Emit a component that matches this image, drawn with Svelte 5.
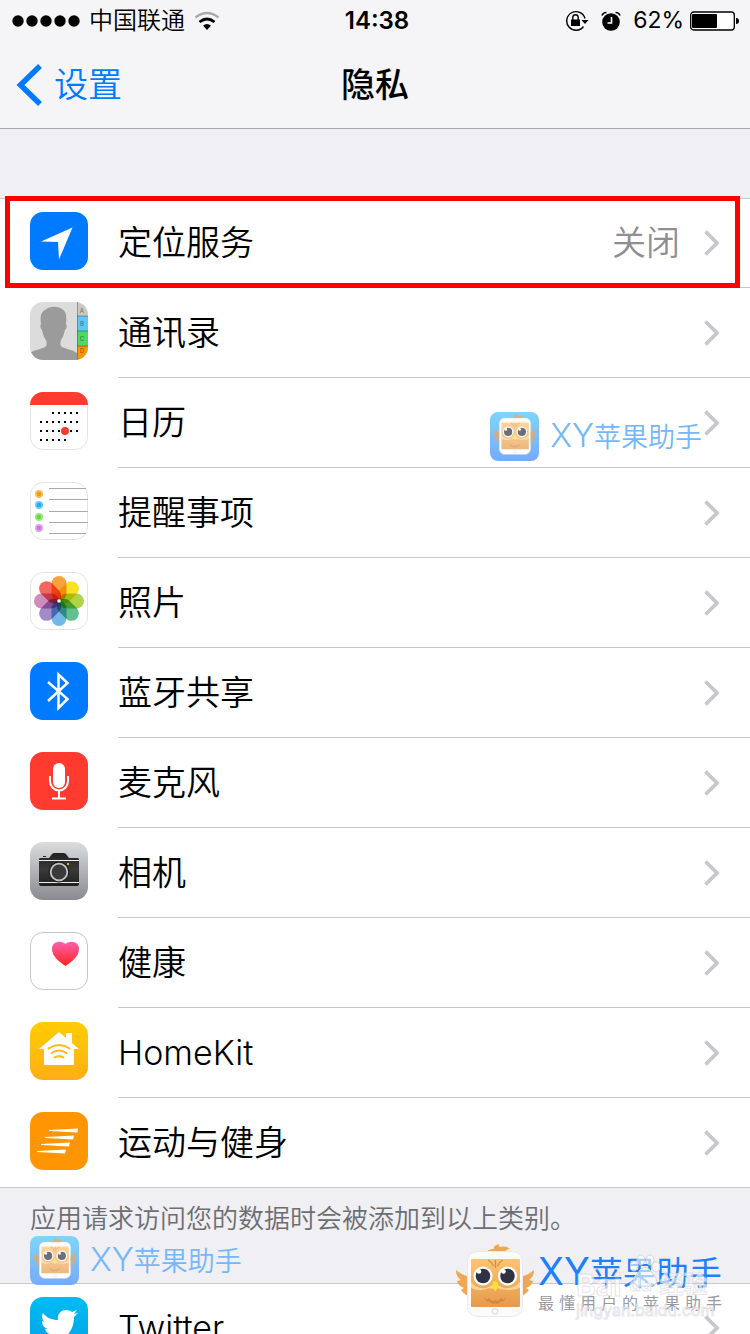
<script>
  const rows = [
    { id: 'location', label: '定位服务', value: '关闭' },
    { id: 'contacts', label: '通讯录' },
    { id: 'calendar', label: '日历' },
    { id: 'reminders', label: '提醒事项' },
    { id: 'photos', label: '照片' },
    { id: 'bluetooth', label: '蓝牙共享' },
    { id: 'microphone', label: '麦克风' },
    { id: 'camera', label: '相机' },
    { id: 'health', label: '健康' },
    { id: 'homekit', label: 'HomeKit' },
    { id: 'motion', label: '运动与健身' }
  ];
  const social = [{ id: 'twitter', label: 'Twitter' }];

  const petals = ['#f9a13a', '#f7e326', '#b0d348', '#62c08f', '#74b9e6', '#a18bc8', '#d08bbf', '#f4655c'];
  const dots = [
    { y: 20, from: 2, to: 6 },
    { y: 29, from: 0, to: 6 },
    { y: 38, from: 0, to: 6 },
    { y: 47, from: 0, to: 4 }
  ];
  const bullets = [
    { y: 12, c: '#ff9500' },
    { y: 23, c: '#1badf8' },
    { y: 35, c: '#63da38' },
    { y: 46, c: '#cc73e1' }
  ];
  const tabs = [
    { y: 0, c: '#c9c8c1', t: 'A', ty: 11 },
    { y: 14, c: '#5ac8fa', t: 'B', ty: 24 },
    { y: 29, c: '#4cd964', t: 'C', ty: 39 },
    { y: 44, c: '#ff9500', t: 'D', ty: 51 }
  ];
</script>

{#snippet owl()}
  <path d="M29 12c1-6 5-7 9-7-1-2 1-4 5-5-1 2 0 3 2 3 4-1 7 0 9 2-3 0-4 1-4 2 2 0 3 2 3 5z" fill="#f0a655" />
  <path d="M13 33C8 31 3 29 0 26c0 5 2 8 5 10l-4 1c1 4 4 6 7 7l-3 2c3 4 6 6 9 6zM65 33c5-2 10-4 13-7 0 5-2 8-5 10l4 1c-1 4-4 6-7 7l3 2c-3 4-6 6-9 6z" fill="#f0a655" />
  <rect x="11.500" y="7.500" width="55" height="65" rx="10" fill="#fbfbfe" stroke="#e8e8ee" />
  <rect x="15" y="15" width="49" height="48" rx="1" fill="url(#owl-face)" />
  <path d="M32 16q4 2 5.500 6M39.500 16v8M47 16q-4 2-5.500 6" fill="none" stroke="#d08b48" stroke-width="1.300" />
  <path d="M28 52q2 6 5 2 3 5 6 2 3 3 6-2 3 4 5-2-1 7-5 5-3 4-6 2-3 2-6-2-4 2-5-5z" fill="#cf8841" />
  <path d="M15 38q5 7 15 6l9-4 9 4q10 1 16-6v6q-12 4-23 0-4 1-8 0-9 4-18 0z" fill="#f9d49b" />
  <circle cx="27" cy="32" r="9.500" fill="#fff" />
  <circle cx="51.500" cy="32" r="9.500" fill="#fff" />
  <circle cx="27" cy="32" r="7.300" fill="#303143" />
  <circle cx="51.500" cy="32" r="7.300" fill="#303143" />
  <circle cx="23" cy="27.500" r="2.300" fill="#fff" />
  <circle cx="47.500" cy="27.500" r="2.300" fill="#fff" />
  <path d="M39.300 36.500q4 3 3 6l-3 5-3-5q-1-3 3-6z" fill="#ffe02e" />
  <circle cx="39" cy="67.500" r="2.800" fill="none" stroke="#d4d5dd" />
{/snippet}

{#snippet mark()}
  <span class="mark">
    <svg width="49" height="49" viewBox="0 0 49 49" aria-hidden="true">
      <rect width="49" height="49" rx="8" fill="url(#mark-bg)" />
      <rect x="9.500" y="6" width="31" height="36" rx="5" fill="#fff" />
      <g transform="translate(3 2) scale(.56)" opacity=".7">{@render owl()}</g>
    </svg>
    <span><b>XY</b>苹果助手</span>
  </span>
{/snippet}

{#snippet icon(id)}
  <svg class="icon" width="58" height="58" viewBox="0 0 58 58" aria-hidden="true">
    {#if id === 'location'}
      <rect width="58" height="58" rx="13" fill="#007aff" />
      <path d="M42.500 15.500L29 47.500 28 30 11 29.500z" fill="#fff" />
    {:else if id === 'contacts'}
      <g clip-path="url(#tile)">
        <rect width="58" height="58" fill="#dcdcdc" />
        <path d="M0 58v-7c4-3 12-4 15-6 2-1 2-4 1-7-3-4-3-7-4-10-2-2-2-4-1-6-1-8 0-12 4-14 5-4 12-4 17-1 4 2 5 7 4 15 1 2 1 4-1 6-1 4-2 7-4 10-1 3-1 6 1 7 4 2 11 3 15 6v7z" fill="#9b9b9b" />
        {#each tabs as t}
          <rect x="47" y={t.y} width="11" height="16" fill={t.c} />
          <path d={`M47 ${t.y}h11`} stroke="#000" stroke-opacity=".3" />
          <text x="52" y={t.ty} class="tab">{t.t}</text>
        {/each}
        <path d="M47.500 0v58" stroke="#000" stroke-opacity=".25" />
      </g>
    {:else if id === 'calendar'}
      <rect x=".5" y=".5" width="57" height="57" rx="12.500" fill="#fff" stroke="#e3e3e3" />
      <g clip-path="url(#tile)"><rect width="58" height="13" fill="#ff3b30" /></g>
      {#each dots as d}
        {#each Array(d.to - d.from + 1) as _, i}
          <rect x={10 + (d.from + i) * 6} y={d.y} width="2" height="2" />
        {/each}
      {/each}
      <circle cx="35" cy="39" r="4" fill="#ff3b30" />
    {:else if id === 'reminders'}
      <rect x=".5" y=".5" width="57" height="57" rx="12.500" fill="#fff" stroke="#e3e3e3" />
      {#each bullets as b}
        <circle cx="9" cy={b.y} r="4" fill={b.c} fill-opacity=".65" />
        <circle cx="9" cy={b.y} r="2.300" fill={b.c} />
      {/each}
      <path d="M19 6.500h37M19 17.500h39M19 29.500h39M19 40.500h39M19 51.500h37" stroke="#a8a8a8" />
    {:else if id === 'photos'}
      <rect x=".5" y=".5" width="57" height="57" rx="12.500" fill="#fff" stroke="#e3e3e3" />
      {#each petals as c, i}
        <rect class="petal" x="21.500" y="4" width="15" height="25" rx="7.500" fill={c} transform={`rotate(${i * 45} 29 29)`} />
      {/each}
      <circle cx="29" cy="29" r="1.800" fill="#fff" />
    {:else if id === 'bluetooth'}
      <rect width="58" height="58" rx="13" fill="#007aff" />
      <path d="M18 20l19.500 17L28.500 46V12.500L37.500 21 18 39" fill="none" stroke="#fff" stroke-width="2.500" />
    {:else if id === 'microphone'}
      <rect width="58" height="58" rx="13" fill="#ff3b30" />
      <rect x="23" y="11" width="12" height="25" rx="6" fill="#fff" />
      <path d="M20 24v5a9 9.500 0 0 0 18 0v-5M29 38.500v8M22 46.500h14" fill="none" stroke="#fff" stroke-width="2" />
    {:else if id === 'camera'}
      <rect width="58" height="58" rx="13" fill="url(#camera-bg)" />
      <path d="M9 17q0-1 2-1h8l3-4q1-1 3-1h8q2 0 3 1l3 4h8q2 0 2 1v25q0 2-2 2H11q-2 0-2-2z" fill="url(#camera-body)" />
      <path d="M9 18.500h40M9 40.500h40" stroke="#eee" />
      <path d="M13 14.500h3" stroke="#222" />
      <circle cx="29" cy="30" r="10.500" fill="#222" />
      <circle cx="29" cy="30" r="8.300" fill="#3a3a3a" stroke="#c5c5c8" stroke-width="1.800" />
      <rect x="37" y="21" width="2" height="2" fill="#f7b500" />
    {:else if id === 'health'}
      <rect x=".5" y=".5" width="57" height="57" rx="12.500" fill="#fff" stroke="#c6c6c6" />
      <path d="M35.500 34C30 30 22 25 22 17c0-8 9-9 13.500-5C40 8 49 9 49 17c0 8-8 13-13.500 17z" fill="url(#heart)" />
    {:else if id === 'homekit'}
      <rect width="58" height="58" rx="13" fill="url(#home-bg)" />
      <path d="M9 27L29 10l7 6v-5h6v10l7 6h-5v16H14V27z" fill="#fff" />
      <path d="M18.500 26.500q10.500-7 21 0M21.500 31q7.500-5 15 0M24.500 35.500q4.500-2.500 9 0" fill="none" stroke="#ffb914" stroke-width="2" stroke-linecap="round" />
    {:else if id === 'motion'}
      <rect width="58" height="58" rx="13" fill="#ff9500" />
      <path d="M19 18l29-1.500-.5 4L19 19zM15 25l29-1.500-1 4L15 26zM11 32l29-1.500-1 4L11 33zM7 39l29-1.500-1 4L7 40z" fill="#fff" />
    {:else if id === 'twitter'}
      <rect width="58" height="58" rx="13" fill="url(#twitter-bg)" />
      <path d="M13 16c4 5 9 7 15 7-1-6 3-10 8-10 3 0 5 1 6 2l5-2-3 4 4-1-4 4c0 15-10 24-21 24-5 0-9-1-12-3 4 0 8-1 11-3-4-1-6-3-7-6h3c-4-1-6-4-6-8l3 1c-3-2-4-6-2-9z" fill="#fff" />
    {/if}
  </svg>
{/snippet}

{#snippet row(r)}
  <li class="row">
    {@render icon(r.id)}
    <a class="link" href={`#${r.id}`}>
      <span class="label">{r.label}</span>
      {#if r.value}<span class="value">{r.value}</span>{/if}
      <svg width="18" height="28" viewBox="0 0 18 28" aria-hidden="true">
        <path d="M2.500 2.500L14 14 2.500 25.500" fill="none" stroke="#c7c7cc" stroke-width="3.800" />
      </svg>
    </a>
    {#if r.id === 'location'}<span class="frame"></span>{/if}
    {#if r.id === 'calendar'}<div class="over">{@render mark()}</div>{/if}
  </li>
{/snippet}

<svg class="defs" width="0" height="0" aria-hidden="true">
  <defs>
    <clipPath id="tile"><rect width="58" height="58" rx="13" /></clipPath>
    <linearGradient id="owl-face" x2="0" y2="1"><stop stop-color="#ffc470" /><stop offset="1" stop-color="#e69a4b" /></linearGradient>
    <linearGradient id="mark-bg" x2="0" y2="1"><stop stop-color="#7fd5f8" /><stop offset="1" stop-color="#76aaff" /></linearGradient>
    <linearGradient id="camera-bg" x2="0" y2="1"><stop stop-color="#dbdcde" /><stop offset="1" stop-color="#898b91" /></linearGradient>
    <linearGradient id="camera-body" x2="0" y2="1"><stop stop-color="#222" /><stop offset=".5" stop-color="#3a3a3a" /><stop offset="1" stop-color="#1e1e1e" /></linearGradient>
    <linearGradient id="heart" x2="0" y2="1"><stop stop-color="#ff5fb4" /><stop offset="1" stop-color="#ff2419" /></linearGradient>
    <linearGradient id="home-bg" x2="0" y2="1"><stop stop-color="#ffcc02" /><stop offset="1" stop-color="#ffae16" /></linearGradient>
    <linearGradient id="twitter-bg" x2="0" y2="1"><stop stop-color="#00bdf2" /><stop offset="1" stop-color="#009ee8" /></linearGradient>
  </defs>
</svg>

<div class="screen">
  <header>
    <div class="status">
      <div class="side">
        <svg width="68" height="12" viewBox="0 0 68 12" aria-hidden="true">
          {#each Array(5) as _, i}<circle cx={6 + i * 14} cy="6" r="5.700" />{/each}
        </svg>
        <span class="carrier">中国联通</span>
        <svg width="26" height="20" viewBox="0 0 26 20" aria-hidden="true">
          <path d="M1.500 6.500q11.500-9 23 0" fill="none" stroke="#aaa" stroke-width="2.600" />
          <path d="M5.500 11q7.500-6 15 0" fill="none" stroke="#000" stroke-width="2.800" />
          <path d="M9 14.500q4-3 8 0L13 19z" />
        </svg>
      </div>
      <time>14:38</time>
      <div class="side end">
        <svg width="24" height="22" viewBox="0 0 24 22" aria-hidden="true">
          <path d="M18.500 16.500A9.300 9.300 0 1 1 20 8.500" fill="none" stroke="#000" stroke-width="1.400" />
          <path d="M16.500 10h7L20 14zM6 9.500h9V16H6z" />
          <path d="M7.800 10V7.500a2.700 2.700 0 0 1 5.400 0V10" fill="none" stroke="#000" stroke-width="1.400" />
        </svg>
        <svg class="alarm" width="20" height="20" viewBox="0 0 20 20" aria-hidden="true">
          <circle cx="10" cy="11" r="8.800" />
          <path d="M1 4.500Q2 1.500 5.500 1.500M19 4.500Q18 1.500 14.500 1.500" fill="none" stroke="#000" stroke-width="1.600" />
          <path d="M10.500 6v6H6.500" fill="none" stroke="#fff" stroke-width="1.600" />
        </svg>
        <span class="percent">62%</span>
        <svg width="49" height="20" viewBox="0 0 49 20" aria-hidden="true">
          <rect x=".7" y="1" width="43.600" height="18" rx="3" fill="#fff" stroke="#000" stroke-width="1.300" />
          <rect x="2" y="3" width="25" height="14" rx="1" />
          <path d="M46 7q3 0 3 3t-3 3z" />
        </svg>
      </div>
    </div>
    <nav>
      <a class="back" href="#settings">
        <svg width="26" height="42" viewBox="0 0 26 42" aria-hidden="true">
          <path d="M24 2L4.500 21 24 40" fill="none" stroke="#007aff" stroke-width="5.500" />
        </svg>
        设置
      </a>
      <h1>隐私</h1>
    </nav>
  </header>

  <main>
    <ul>{#each rows as r}{@render row(r)}{/each}</ul>
    <section class="note">
      <p>应用请求访问您的数据时会被添加到以上类别。</p>
      {@render mark()}
    </section>
    <ul>{#each social as r}{@render row(r)}{/each}</ul>
  </main>

  <div class="brand">
    <svg width="80" height="74" viewBox="0 0 80 74" aria-hidden="true">{@render owl()}</svg>
    <div class="words">
      <div class="name"><b>XY</b>苹果助手</div>
      <div class="motto">{#each '最懂用户的苹果助手' as ch}<span>{ch}</span>{/each}</div>
    </div>
    <div class="stamp">
      <svg class="paw" width="30" height="34" viewBox="0 0 30 34" aria-hidden="true">
        <ellipse cx="4" cy="12" rx="4" ry="5" /><ellipse cx="11" cy="6" rx="4" ry="5" /><ellipse cx="20" cy="6" rx="4" ry="5" /><ellipse cx="26" cy="13" rx="4" ry="5" />
        <path d="M15 13q4 0 7 6 6 5 4 10-3 4-11 3-8 1-11-3-2-5 4-10 3-6 7-6z" />
      </svg>
      <div class="big"><span>Bai</span><span class="du">du</span><span class="zh">经验</span></div>
      <div class="url">jingyan.baidu.com</div>
    </div>
  </div>
</div>

<style>
  :global(body) { margin: 0; background: #efeff4; }
  .defs { position: absolute; }
  .screen {
    position: relative;
    height: 100vh;
    overflow: hidden;
    background: #efeff4;
    color: #000;
    font-family: Inter, "Noto Sans CJK SC", sans-serif;
    font-weight: 400;
  }
  a { color: inherit; text-decoration: none; }
  svg { display: block; flex: none; }
  .tab { font-size: 6px; font-weight: 500; text-anchor: middle; fill: rgb(0 0 0 / .45); }
  .petal { mix-blend-mode: multiply; }
  header { background: #f5f5f7; border-bottom: 1px solid #a7a7aa; }
  .status {
    display: grid;
    grid-template-columns: 1fr auto 1fr;
    align-items: center;
    height: 41px;
    padding: 0 11px 0 12px;
    font-size: 24px;
    line-height: 41px;
  }
  .side { display: flex; align-items: center; gap: 9px; }
  .carrier { font-weight: 350; }
  .end { justify-content: flex-end; gap: 6px; }
  .alarm { margin: 0 6px; }
  .percent { font-size: 23px; }
  time { font-weight: 600; padding-left: 3px; }
  nav {
    display: grid;
    grid-template-columns: 1fr auto 1fr;
    align-items: center;
    height: 87px;
    padding: 0 16px;
    font-size: 34px;
    line-height: 48px;
  }
  .back { display: flex; align-items: center; gap: 12px; color: #007aff; font-size: 34px; font-weight: 350; }
  h1 { margin: 0; font-size: 34px; font-weight: 500; }
  main { padding-top: 69px; }
  ul {
    margin: 0;
    padding: 0;
    list-style: none;
    background: #fff;
    box-shadow: inset 0 1px #c8c7cc, inset 0 -1px #c8c7cc;
  }
  .row { position: relative; display: flex; align-items: flex-start; gap: 30px; padding-left: 30px; }
  .icon { margin-top: 14px; isolation: isolate; }
  .link {
    flex: 1;
    box-sizing: border-box;
    display: flex;
    align-items: center;
    height: 90px;
    padding-right: 29px;
    border-bottom: 1px solid #c8c7cc;
    font-size: 34px;
    line-height: 50px;
    font-weight: 350;
  }
  .label { flex: 1; }
  .value { margin-right: 23px; color: #8e8e93; }
  .frame { position: absolute; inset: -2px 10px 0 5px; border: 5px solid #f00; }
  .over { position: absolute; right: 48px; top: 33px; }
  .mark { display: flex; align-items: center; gap: 11px; color: #75b7fc; font-size: 27px; line-height: 48px; font-weight: 350; }
  b { font-weight: inherit; font-size: 33px; }
  .note { height: 95px; padding-left: 30px; box-sizing: border-box; }
  .note p { margin: 0; padding-top: 15px; color: #6d6d72; font-size: 26px; line-height: 32px; font-weight: 350; }
  .brand { position: absolute; right: 28px; bottom: 16px; display: flex; align-items: center; gap: 2px; }
  .words { display: grid; width: 184px; padding-top: 4px; }
  .name { color: #1d80ff; font-size: 33px; line-height: 38px; white-space: nowrap; }
  .name b { font-size: 38px; }
  .motto { display: flex; justify-content: space-between; color: #9a9aa4; font-size: 16px; line-height: 22px; }
  .stamp { position: absolute; left: 120px; top: 24px; color: rgb(255 255 255 / .65); -webkit-text-stroke: 1px rgb(212 212 218 / .6); }
  .big { display: flex; align-items: center; font-size: 30px; line-height: 34px; font-weight: 700; }
  .big .du { width: 38px; text-align: center; font-size: 18px; }
  .big .zh { font-size: 24px; }
  .url { font-size: 16px; line-height: 16px; }
  .paw { position: absolute; left: 54px; top: -14px; fill: rgb(255 255 255 / .6); stroke: #d4d4dc; }
</style>
